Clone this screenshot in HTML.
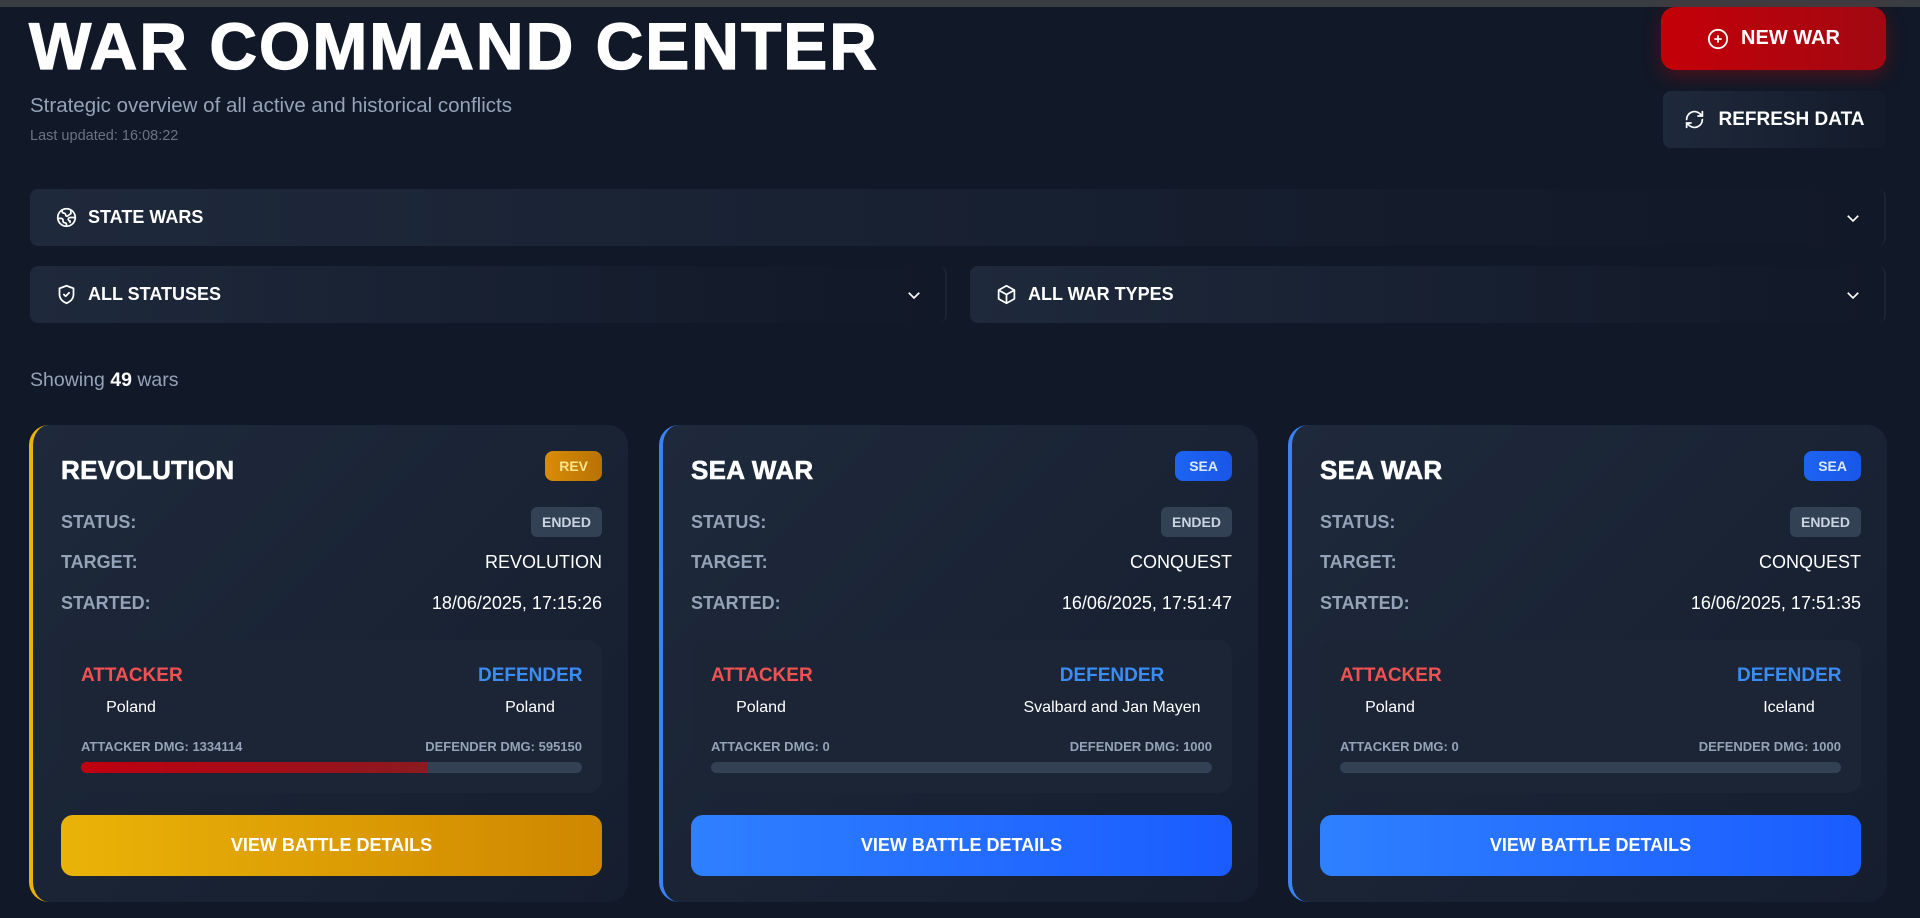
<!DOCTYPE html>
<html><head><meta charset="utf-8"><style>
*{box-sizing:border-box;margin:0;padding:0}
body{width:1920px;height:918px;overflow:hidden;background:#111827;font-family:"Liberation Sans",sans-serif;color:#fff;position:relative}
.topbar{position:absolute;left:0;top:0;width:1920px;height:7px;background:#3a3d42}
.abs{position:absolute}
h1{position:absolute;left:29px;top:11px;font-size:66px;font-weight:900;letter-spacing:2px;line-height:70px;white-space:nowrap;-webkit-text-stroke:1.2px #fff}
.sub{left:30px;top:94px;font-size:20.5px;color:#94a3b8}
.upd{left:30px;top:128px;font-size:14.5px;color:#6b7280}
.btn-new{left:1661px;top:7px;width:225px;height:63px;border-radius:14px;background:linear-gradient(90deg,#c40008,#a10812);box-shadow:0 6px 18px rgba(190,0,10,.35);display:flex;align-items:center;justify-content:center;gap:12px;font-weight:700;font-size:20px}
.btn-ref{left:1663px;top:91px;width:223px;height:57px;border-radius:8px;background:linear-gradient(90deg,#1e293b,#131b2a);display:flex;align-items:center;justify-content:center;gap:13px;font-weight:600;font-size:19px}
.bar{position:absolute;height:57px;border-radius:8px;background:linear-gradient(90deg,#1e293b,#111827);display:flex;align-items:center;padding-left:26px;font-size:18px;font-weight:700;gap:11px;border-right:2px solid #1c2433}
.chev{position:absolute;right:22px;top:20px}
.show{left:30px;top:369px;font-size:19.5px;color:#94a3b8}
.show b{color:#fff}
.card{position:absolute;top:425px;width:599px;height:477px;border-radius:20px;background:linear-gradient(135deg,#1e293b,#151e2e);border-left:4px solid}
.ct{position:absolute;left:28px;top:30px;font-size:26px;font-weight:900;letter-spacing:0.3px;-webkit-text-stroke:0.6px #fff}
.bdg{position:absolute;right:26px;top:26px;height:30px;border-radius:8px;padding:0 14px;font-size:14px;font-weight:700;display:flex;align-items:center}
.row{position:absolute;left:28px;right:26px;display:flex;justify-content:space-between;align-items:center;font-size:18px}
.row .l{color:#94a3b8;font-weight:700}
.ended{background:#334155;color:#cbd5e1;font-size:14px;font-weight:700;border-radius:6px;padding:0 11px;height:30px;display:flex;align-items:center}
.inner{position:absolute;left:28px;top:215px;width:541px;height:153px;border-radius:14px;background:#1b2535}
.side{position:absolute;top:24px;text-align:center;white-space:nowrap}
.side .h{font-size:19px;font-weight:700;line-height:24px}
.side .n{font-size:16px;margin-top:10px;line-height:20px}
.dmg{position:absolute;top:99px;font-size:13px;font-weight:700;color:#94a3b8}
.prog{position:absolute;left:20px;top:122px;width:501px;height:11px;border-radius:6px;background:#334155;overflow:hidden}
.vb{position:absolute;left:28px;top:390px;width:541px;height:61px;border-radius:12px;display:flex;align-items:center;justify-content:center;font-size:18px;font-weight:700}
</style></head><body>
<div class="topbar"></div>
<h1>WAR COMMAND CENTER</h1>
<div class="abs sub">Strategic overview of all active and historical conflicts</div>
<div class="abs upd">Last updated: 16:08:22</div>

<div class="abs btn-new"><svg width="22" height="22" viewBox="0 0 24 24" fill="none" stroke="#fff" stroke-width="2"><circle cx="12" cy="12" r="10"/><path d="M12 8v8M8 12h8"/></svg>NEW WAR</div>
<div class="abs btn-ref"><svg width="21" height="21" viewBox="0 0 24 24" fill="none" stroke="#fff" stroke-width="2" stroke-linecap="round" stroke-linejoin="round"><path d="M3 12a9 9 0 0 1 15-6.7L21 8"/><path d="M21 3v5h-5"/><path d="M21 12a9 9 0 0 1-15 6.7L3 16"/><path d="M8 16H3v5"/></svg>REFRESH DATA</div>

<div class="bar" style="left:30px;top:189px;width:1856px"><svg width="21" height="21" viewBox="0 0 24 24" fill="none" stroke="#fff" stroke-width="2" stroke-linecap="round"><circle cx="12" cy="12" r="10"/><path d="M21.5 12H16c-1 0-2 1-2 2s1 2 2 2v1.5M2.5 13H6c1 0 2 1 2 2v1c0 1 1 2 2 2s2 1 2 2v1.9M7 3.3V5c0 1 1 2 2 2s2 1 2 2c0 1.2 1.5 2 2.5 1L17 7.5V4.6"/></svg>STATE WARS<svg class="chev" width="18" height="18" viewBox="0 0 24 24" fill="none" stroke="#fff" stroke-width="2.2"><path d="M5 9l7 7 7-7"/></svg></div>
<div class="bar" style="left:30px;top:266px;width:917px"><svg width="21" height="21" viewBox="0 0 24 24" fill="none" stroke="#fff" stroke-width="2" stroke-linejoin="round" stroke-linecap="round"><path d="M12 2l8 3v7c0 5-4 8.5-8 10-4-1.5-8-5-8-10V5z"/><path d="M9 12l2 2 4-4"/></svg>ALL STATUSES<svg class="chev" width="18" height="18" viewBox="0 0 24 24" fill="none" stroke="#fff" stroke-width="2.2"><path d="M5 9l7 7 7-7"/></svg></div>
<div class="bar" style="left:970px;top:266px;width:916px"><svg width="21" height="21" viewBox="0 0 24 24" fill="none" stroke="#fff" stroke-width="2" stroke-linejoin="round"><path d="M12 2l9 5v10l-9 5-9-5V7z"/><path d="M3 7l9 5 9-5M12 12v10"/></svg>ALL WAR TYPES<svg class="chev" width="18" height="18" viewBox="0 0 24 24" fill="none" stroke="#fff" stroke-width="2.2"><path d="M5 9l7 7 7-7"/></svg></div>

<div class="abs show">Showing <b>49</b> wars</div>

<div class="card" style="left:29px;border-color:#eab308">
 <div class="ct">REVOLUTION</div>
 <div class="bdg" style="background:linear-gradient(90deg,#d98c06,#b87206);color:#fde68a">REV</div>
 <div class="row" style="top:82px;height:30px"><span class="l">STATUS:</span><span class="ended">ENDED</span></div>
 <div class="row" style="top:127px"><span class="l">TARGET:</span><span>REVOLUTION</span></div>
 <div class="row" style="top:168px"><span class="l">STARTED:</span><span>18/06/2025, 17:15:26</span></div>
 <div class="inner">
  <div class="side" style="left:20px;width:100px"><div class="h" style="color:#f05252">ATTACKER</div><div class="n">Poland</div></div>
  <div class="side" style="right:20px;width:104px"><div class="h" style="color:#3b8cf5">DEFENDER</div><div class="n">Poland</div></div>
  <div class="dmg" style="left:20px">ATTACKER DMG: 1334114</div>
  <div class="dmg" style="right:20px">DEFENDER DMG: 595150</div>
  <div class="prog"><div style="width:69%;height:100%;background:linear-gradient(90deg,#c00010,#8b1a20)"></div></div>
 </div>
 <div class="vb" style="background:linear-gradient(90deg,#eab308,#cf8700)">VIEW BATTLE DETAILS</div>
</div>

<div class="card" style="left:659px;border-color:#3b82f6">
 <div class="ct">SEA WAR</div>
 <div class="bdg" style="background:linear-gradient(90deg,#1d64f2,#1a56e8);color:#dbeafe">SEA</div>
 <div class="row" style="top:82px;height:30px"><span class="l">STATUS:</span><span class="ended">ENDED</span></div>
 <div class="row" style="top:127px"><span class="l">TARGET:</span><span>CONQUEST</span></div>
 <div class="row" style="top:168px"><span class="l">STARTED:</span><span>16/06/2025, 17:51:47</span></div>
 <div class="inner">
  <div class="side" style="left:20px;width:100px"><div class="h" style="color:#f05252">ATTACKER</div><div class="n">Poland</div></div>
  <div class="side" style="right:20px;width:200px"><div class="h" style="color:#3b8cf5">DEFENDER</div><div class="n">Svalbard and Jan Mayen</div></div>
  <div class="dmg" style="left:20px">ATTACKER DMG: 0</div>
  <div class="dmg" style="right:20px">DEFENDER DMG: 1000</div>
  <div class="prog"></div>
 </div>
 <div class="vb" style="background:linear-gradient(90deg,#2f80ff,#1a5cff)">VIEW BATTLE DETAILS</div>
</div>

<div class="card" style="left:1288px;border-color:#3b82f6">
 <div class="ct">SEA WAR</div>
 <div class="bdg" style="background:linear-gradient(90deg,#1d64f2,#1a56e8);color:#dbeafe">SEA</div>
 <div class="row" style="top:82px;height:30px"><span class="l">STATUS:</span><span class="ended">ENDED</span></div>
 <div class="row" style="top:127px"><span class="l">TARGET:</span><span>CONQUEST</span></div>
 <div class="row" style="top:168px"><span class="l">STARTED:</span><span>16/06/2025, 17:51:35</span></div>
 <div class="inner">
  <div class="side" style="left:20px;width:100px"><div class="h" style="color:#f05252">ATTACKER</div><div class="n">Poland</div></div>
  <div class="side" style="right:20px;width:104px"><div class="h" style="color:#3b8cf5">DEFENDER</div><div class="n">Iceland</div></div>
  <div class="dmg" style="left:20px">ATTACKER DMG: 0</div>
  <div class="dmg" style="right:20px">DEFENDER DMG: 1000</div>
  <div class="prog"></div>
 </div>
 <div class="vb" style="background:linear-gradient(90deg,#2f80ff,#1a5cff)">VIEW BATTLE DETAILS</div>
</div>
</body></html>
